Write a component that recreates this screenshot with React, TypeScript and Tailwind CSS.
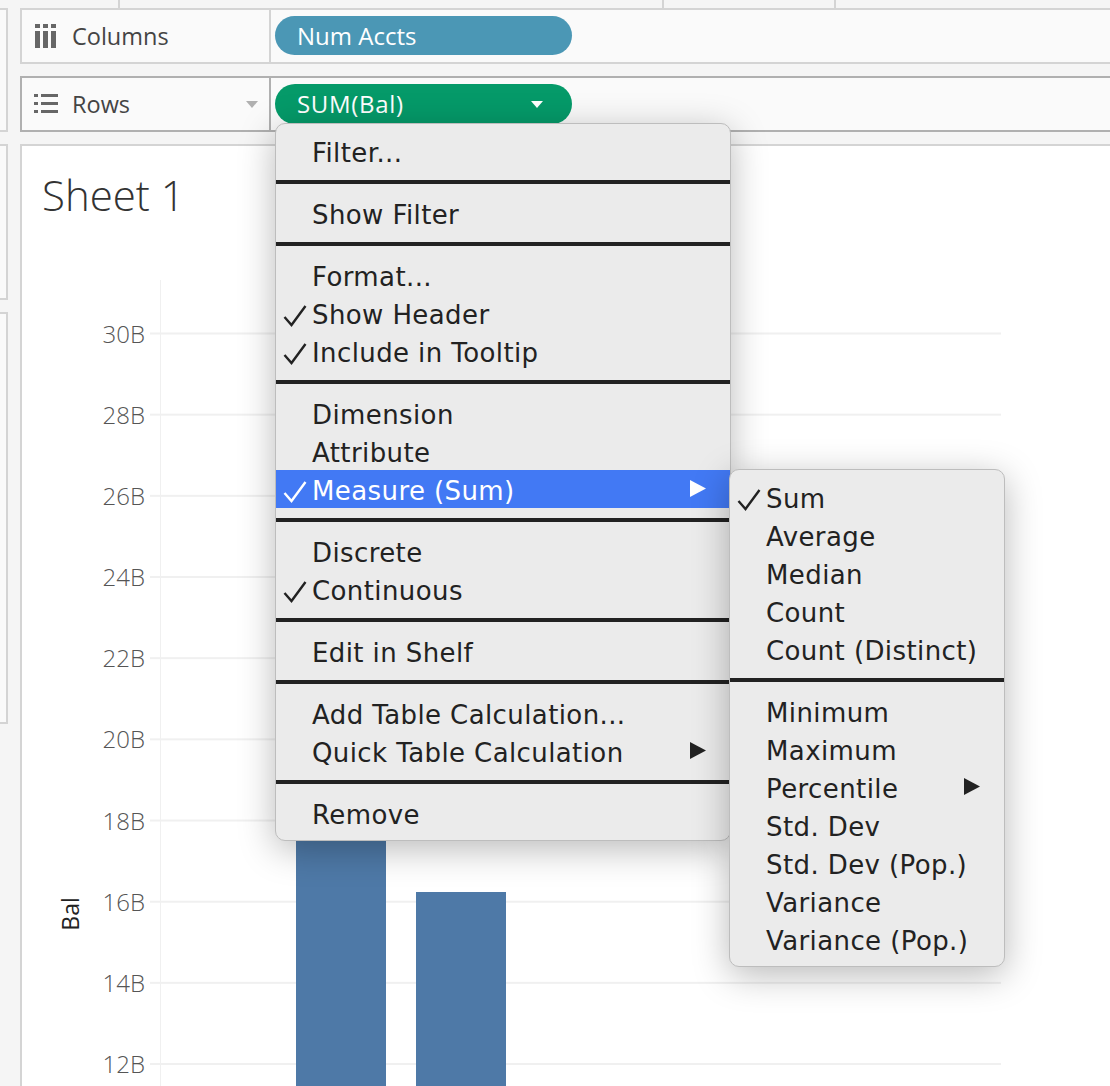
import { Fragment } from "react";

type Item = { label: string; checked?: boolean; arrow?: boolean; active?: boolean };

const mainMenu: Item[][] = [
  [{ label: "Filter..." }],
  [{ label: "Show Filter" }],
  [{ label: "Format..." }, { label: "Show Header", checked: true }, { label: "Include in Tooltip", checked: true }],
  [{ label: "Dimension" }, { label: "Attribute" }, { label: "Measure (Sum)", checked: true, arrow: true, active: true }],
  [{ label: "Discrete" }, { label: "Continuous", checked: true }],
  [{ label: "Edit in Shelf" }],
  [{ label: "Add Table Calculation..." }, { label: "Quick Table Calculation", arrow: true }],
  [{ label: "Remove" }],
];

const subMenu: Item[][] = [
  [{ label: "Sum", checked: true }, { label: "Average" }, { label: "Median" }, { label: "Count" }, { label: "Count (Distinct)" }],
  [
    { label: "Minimum" },
    { label: "Maximum" },
    { label: "Percentile", arrow: true },
    { label: "Std. Dev" },
    { label: "Std. Dev (Pop.)" },
    { label: "Variance" },
    { label: "Variance (Pop.)" },
  ],
];

const ticks = ["30B", "28B", "26B", "24B", "22B", "20B", "18B", "16B", "14B", "12B"];

function Check({ className }: { className: string }) {
  return (
    <svg width="24" height="22" viewBox="0 0 24 22" className={className}>
      <path d="M1.5 12 L8.5 20 L22.5 1" fill="none" stroke="currentColor" strokeWidth="2.4" />
    </svg>
  );
}

function MenuRow({ item, arrowRight, checkLeft, textLeft }: { item: Item; arrowRight: string; checkLeft: string; textLeft: string }) {
  return (
    <div className={`relative h-[38px] flex items-center ${textLeft} ${item.active ? "bg-[#4279f4] text-white" : "text-[#222222]"}`}>
      {item.checked && <Check className={`absolute ${checkLeft} top-[11px]`} />}
      <span className="relative top-[2px]">{item.label}</span>
      {item.arrow && (
        <svg width="16" height="17" viewBox="0 0 16 17" className={`absolute ${arrowRight} top-[10px]`}>
          <path d="M0 0 L16 8.5 L0 17 Z" fill="currentColor" />
        </svg>
      )}
    </div>
  );
}

function Menu({ groups, className, arrowRight, checkLeft, textLeft }: { groups: Item[][]; className: string; arrowRight: string; checkLeft: string; textLeft: string }) {
  return (
    <div className={`absolute py-2 bg-[#ebebeb] rounded-[10px] border-[#bdbdbd] shadow-[0_8px_36px_rgba(0,0,0,0.28)] font-['DejaVu_Sans',sans-serif] text-[26px] tracking-[0.4px] ${className}`}>
      {groups.map((group, i) => (
        <Fragment key={i}>
          {i > 0 && <div className="h-1 my-[10px] bg-[#222222]" />}
          {group.map((item) => (
            <MenuRow key={item.label} item={item} arrowRight={arrowRight} checkLeft={checkLeft} textLeft={textLeft} />
          ))}
        </Fragment>
      ))}
    </div>
  );
}

function Chart() {
  return (
    <svg width="1088" height="840" className="block font-['Open_Sans',sans-serif]">
      <rect x="138" y="34" width="1" height="806" fill="#f0f0f0" />
      {ticks.map((t, i) => {
        const y = 87.5 + i * 81.17;
        return (
          <Fragment key={t}>
            <rect x="128" y={y - 1} width="851" height="2" fill="#f0f0f0" />
            <text x="123" y={y + 9} textAnchor="end" fontSize="24" fontWeight="300" fill="#555555">
              {t}
            </text>
          </Fragment>
        );
      })}
      <rect x="274" y="400" width="90" height="440" fill="#4e79a7" />
      <rect x="394" y="646" width="90" height="194" fill="#4e79a7" />
      <text transform="translate(57 668) rotate(-90)" textAnchor="middle" fontSize="23" fill="#222222">
        Bal
      </text>
    </svg>
  );
}

export default function App() {
  return (
    <div className="relative h-[1086px] w-[1110px] overflow-hidden bg-[#f5f5f5] font-['Open_Sans',sans-serif] flex">
      {/* left side panels, cut off by the crop */}
      <div className="w-2 shrink-0 flex flex-col pt-2 gap-3">
        <div className="h-[124px] bg-[#fafafa] border-y-2 border-r-2 border-[#d4d4d4]" />
        <div className="h-[156px] bg-[#fafafa] border-y-2 border-r-2 border-[#d4d4d4]" />
        <div className="h-[412px] bg-[#fafafa] border-y-2 border-r-2 border-[#d4d4d4]" />
      </div>

      <div className="ml-3 flex-1 flex flex-col min-w-0">
        {/* tick marks above the shelves */}
        <div className="h-2 shrink-0 relative">
          <div className="absolute left-[98px] w-[2px] h-2 bg-[#d4d4d4]" />
          <div className="absolute left-[642px] w-[2px] h-2 bg-[#d4d4d4]" />
          <div className="absolute left-[814px] w-[2px] h-2 bg-[#d4d4d4]" />
        </div>

        {/* Columns shelf */}
        <div className="h-14 shrink-0 flex bg-[#fafafa] border-y-2 border-l-2 border-[#d4d4d4]">
          <div className="w-[249px] shrink-0 flex items-center pl-[13px] border-r-2 border-[#d4d4d4]">
            <svg width="21" height="24" viewBox="0 0 21 24" className="shrink-0 text-[#666666]">
              <path d="M0 7h5v17H0zM8 7h5v17H8zM16 7h5v17h-5zM0 0h5v4H0zM8 0h5v4H8zM16 0h5v4h-5z" fill="currentColor" />
            </svg>
            <span className="ml-[16px] pt-[2px] text-[23.5px] leading-none text-[#444444]">Columns</span>
          </div>
          <div className="flex items-center pl-[4px] -mt-[1px]">
            <div className="w-[297px] h-[39px] rounded-full bg-[#4b97b5] text-white text-[24px] pl-[22px] flex items-center">Num Accts</div>
          </div>
        </div>

        {/* Rows shelf */}
        <div className="mt-3 h-14 shrink-0 flex bg-[#fafafa] border-y-2 border-l-2 border-[#b0b0b0]">
          <div className="relative w-[249px] shrink-0 flex items-center pl-[12px] border-r-2 border-[#b0b0b0]">
            <svg width="24" height="20" viewBox="0 0 24 20" className="shrink-0 text-[#666666]">
              <path d="M0 0h4v3H0zM7 0h17v3H7zM0 8h4v3H0zM7 8h17v3H7zM0 16h4v3H0zM7 16h17v3H7z" fill="currentColor" />
            </svg>
            <span className="ml-[14px] pt-[2px] text-[23.5px] leading-none text-[#444444]">Rows</span>
            <svg width="12" height="7" viewBox="0 0 12 7" className="absolute right-[11px] top-[23px]">
              <path d="M0 0h12L6 7z" fill="#b0b0b0" />
            </svg>
          </div>
          <div className="flex items-center pl-[4px]">
            <div className="relative w-[297px] h-[40px] rounded-full bg-[#059a69] text-white text-[24px] tracking-[0.7px] pl-[22px] flex items-center">
              SUM(Bal)
              <svg width="12" height="7" viewBox="0 0 12 7" className="absolute right-[29px] top-[17px]">
                <path d="M0 0h12L6 7z" fill="#ffffff" />
              </svg>
            </div>
          </div>
        </div>

        {/* Sheet */}
        <div className="mt-3 flex-1 bg-white border-t-2 border-l-2 border-[#d4d4d4]">
          <div className="h-[100px] pl-[20px] pt-[20px] text-[42px] leading-[58px] font-light text-[#333333]">Sheet 1</div>
          <Chart />
        </div>
      </div>

      <Menu
        groups={mainMenu}
        className="left-[275px] top-[123px] w-[456px] border"
        arrowRight="right-[24px]"
        checkLeft="left-[7px]"
        textLeft="pl-[36px]"
      />
      <Menu
        groups={subMenu}
        className="left-[729px] top-[469px] w-[276px] border"
        arrowRight="right-[24px]"
        checkLeft="left-[7px]"
        textLeft="pl-[36px]"
      />
    </div>
  );
}
